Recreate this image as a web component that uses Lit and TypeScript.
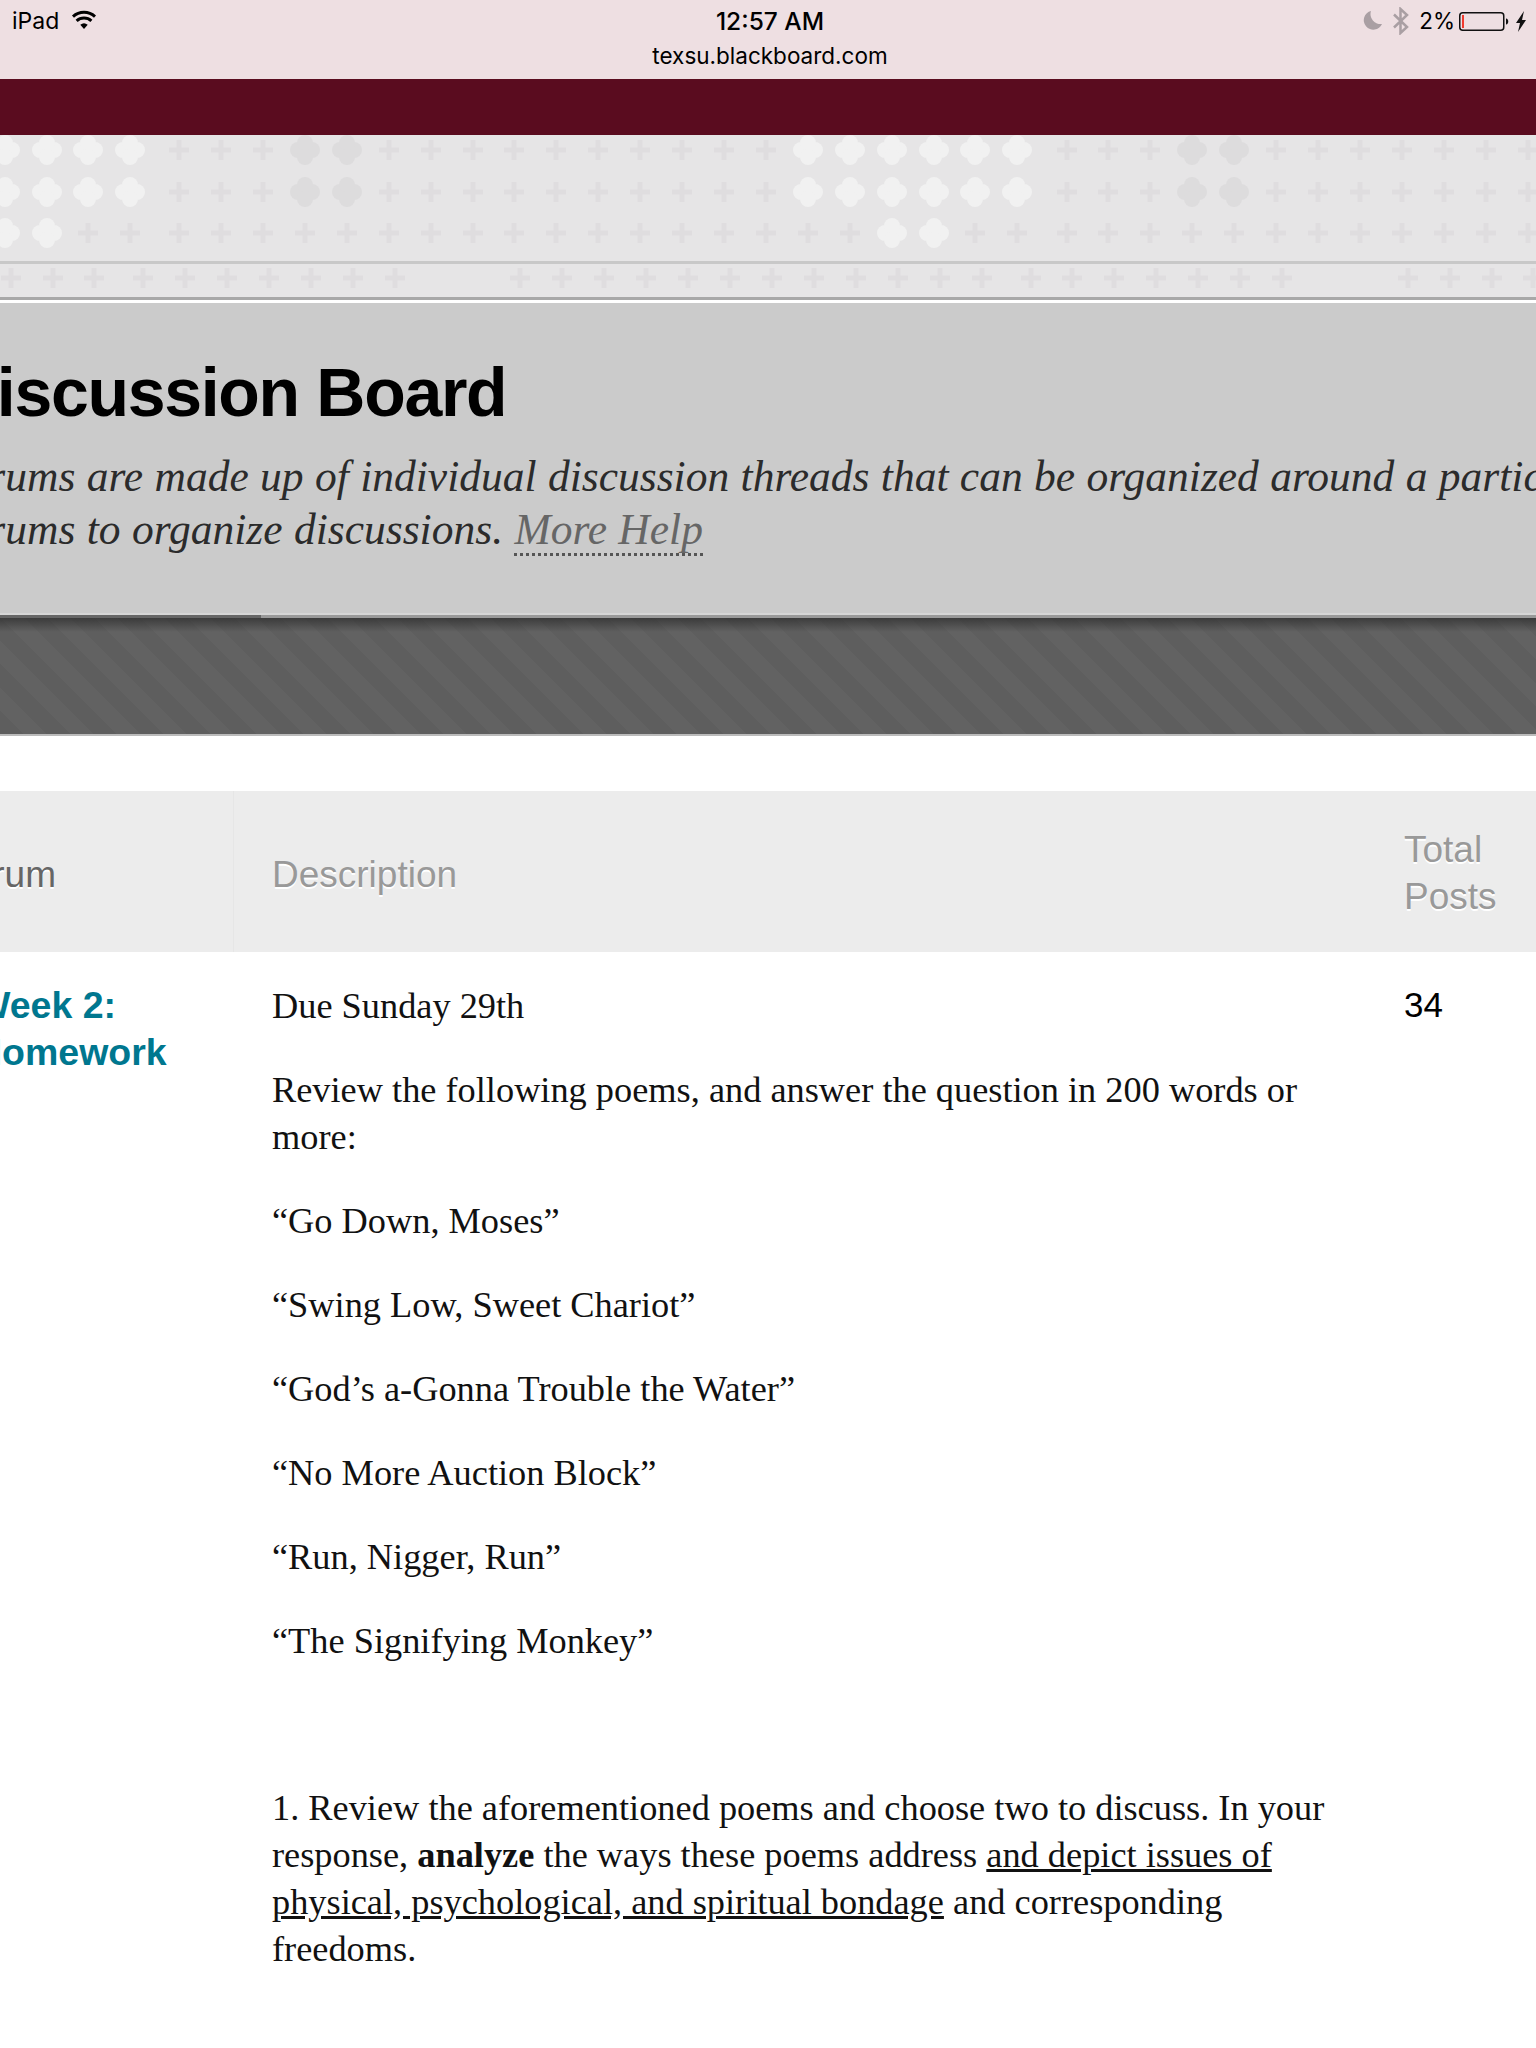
import { LitElement, html, css, svg } from "lit";
import { customElement } from "lit/decorators.js";

const COL = [5, 47, 88, 130, 179, 221, 263, 305, 347, 389, 431, 473, 514, 556, 598, 640, 682, 724, 766, 808, 850, 892, 934, 975, 1017, 1067, 1108, 1150, 1192, 1234, 1276, 1318, 1360, 1402, 1444, 1486, 1528];
const BAND = [11, 53, 94, 143, 185, 227, 269, 311, 353, 395, 520, 562, 604, 646, 688, 730, 772, 814, 856, 898, 940, 982, 1031, 1072, 1114, 1156, 1198, 1240, 1282, 1408, 1450, 1492, 1533];
const LIGHT_TOP = new Set([5, 47, 88, 130, 808, 850, 892, 934, 975, 1017]);
const DARK_TOP = new Set([305, 347, 1192, 1234]);
const LIGHT_LOW = new Set([5, 47, 892, 934]);

const plus = (x: number, y: number) => svg`<path class="plus" d="M${x - 10} ${y}H${x + 10}M${x} ${y - 10}V${y + 10}"/>`;
const clover = (x: number, y: number, cls: string) => svg`<g class=${cls}><circle cx=${x - 7} cy=${y} r="8"/><circle cx=${x + 7} cy=${y} r="8"/><circle cx=${x} cy=${y - 7} r="8"/><circle cx=${x} cy=${y + 7} r="8"/></g>`;
const mark = (x: number, y: number, light: Set<number>, dark: Set<number>) =>
  light.has(x) ? clover(x, y, "light") : dark.has(x) ? clover(x, y, "dark") : plus(x, y);

@customElement("app-root")
export class AppRoot extends LitElement {
  static styles = css`
    :host { display: block; width: 1536px; height: 2048px; overflow: hidden; background: #fff; font-family: "Liberation Sans", Arial, sans-serif; color: #000; }
    .status { height: 79px; background: #eedfe2; display: grid; grid-template-columns: 1fr auto 1fr; padding: 8px 8px 0 12px; box-sizing: border-box; font-size: 23px; line-height: 26px; }
    .status .left { display: flex; align-items: flex-start; gap: 12px; font-family: Inter, "Liberation Sans", sans-serif; font-size: 23px; }
    .status .left svg { margin-top: 2px; }
    .status .mid { text-align: center; font-family: Inter, "Liberation Sans", sans-serif; }
    .clock { font-weight: 500; font-size: 24.5px; line-height: 26px; margin-bottom: 9px; }
    .host { font-size: 22.5px; line-height: 26px; margin-top: 7px; }
    .status .right { display: flex; justify-content: flex-end; align-items: flex-start; font-family: Inter, "Liberation Sans", sans-serif; }
    .moon { margin-top: 2px; }
    .bt { margin: -1px 0 0 9px; }
    .batt { margin-top: 2px; }
    .pct { margin: 0 4px 0 9px; font-size: 22.5px; }
    .maroon { height: 56px; background: #5a0c1f; }
    .pattern { display: block; width: 1536px; height: 168px; background: #e6e5e6; }
    .pattern .plus { stroke: #dfdddf; stroke-width: 5; fill: none; }
    .pattern .light { fill: #f1f1f1; }
    .pattern .dark { fill: #dddcdd; }
    .pattern .soft { filter: blur(0.7px); }
    .pattern .rule1 { fill: #c8c8c8; }
    .pattern .rule2 { fill: #a8a8a8; }
    .pattern .gap { fill: #fff; }
    .head { height: 315px; background: #cbcbcb; box-sizing: border-box; overflow: hidden; white-space: nowrap; padding-top: 51px; border-bottom: 3px solid #777; border-image: linear-gradient(90deg, #666 262px, #999 262px) 1; box-shadow: inset 0 -2px 0 #d6d6d6; }
    h1 { margin: 0 0 0 -51px; font-size: 68px; line-height: 76px; font-weight: 700; letter-spacing: -1.3px; }
    .lead { margin: 20px 0 0 -60px; font-family: "Liberation Serif", "DejaVu Serif", serif; font-style: italic; font-size: 43.5px; line-height: 53px; word-spacing: 0.5px; color: #2b2b2b; }
    .help { color: #666; border-bottom: 3px dotted #555; }
    .stripes { height: 118px; box-sizing: border-box; border-bottom: 2px solid #bbb; background:
      linear-gradient(180deg, rgba(40,40,40,.65), rgba(40,40,40,0) 14px),
      repeating-linear-gradient(45deg, #5e5e5e 0 16.5px, #626262 16.5px 33px); }
    .table { margin-top: 55px; display: grid; grid-template-columns: 234px 1169px 133px; overflow: hidden; }
    .th { height: 161px; background: #ececec; display: flex; align-items: center; color: #999; font-size: 37px; line-height: 47px; box-sizing: border-box; padding: 5px 0 0 38px; text-shadow: 0 2px 0 #fff; }
    .th.forum { color: #666; padding-left: 0; border-right: 1px solid #e6e6e6; justify-content: flex-end; padding-right: 177px; white-space: nowrap; }
    .th.posts { padding: 2px 0 0 1px; }
    .name { color: #00778f; font-weight: 700; font-size: 37.5px; line-height: 47px; padding-top: 30px; margin-left: -25px; white-space: nowrap; }
    .desc { padding: 31px 40px 0 38px; font-family: "Liberation Serif", serif; font-size: 36.35px; line-height: 47px; color: #111; }
    .desc p { margin: 0 0 37px; }
    .desc .spacer { height: 47px; margin-bottom: 36px; }
    .count { font-size: 35px; line-height: 47px; padding: 29px 0 0 1px; }
  `;

  render() {
    return html`
      <div class="status">
        <div class="left">iPad
          <svg width="26" height="20" viewBox="0 0 26 20"><path d="M13 19 9.3 14.8a5.6 5.6 0 0 1 7.4 0Z" fill="#000"/><path d="M5.6 10.8a11 11 0 0 1 14.8 0M2 6.6a16.4 16.4 0 0 1 22 0" fill="none" stroke="#000" stroke-width="3"/></svg>
        </div>
        <div class="mid"><div class="clock">12:57 AM</div><div class="host">texsu.blackboard.com</div></div>
        <div class="right">
          <svg class="moon" width="20" height="22" viewBox="0 0 20 22"><path d="M8 1a9.5 9.500 0 1 0 11 13A10 10 0 0 1 8 1Z" fill="#a99fa3"/></svg>
          <svg class="bt" width="18" height="28" viewBox="0 0 18 28"><path d="M2 7.500 15 20 8.500 26V2L15 8 2 20.500" fill="none" stroke="#a99fa3" stroke-width="2.500"/></svg>
          <span class="pct">2%</span>
          <svg class="batt" width="69" height="22" viewBox="0 0 69 22"><rect x=".75" y="2.750" width="44" height="17.500" rx="3" fill="none" stroke="#111" stroke-width="1.500"/><rect x="3" y="5" width="2" height="13" fill="#f03a2e"/><path d="M47 8.500c3 0 3 6 0 6Z" fill="#111"/><path d="M65 1 57 13h4l-2 9 8-12h-4Z" fill="#111"/></svg>
        </div>
      </div>
      <div class="maroon"></div>
      <svg class="pattern" viewBox="0 0 1536 168" aria-hidden="true">
        <g class="soft">
          ${COL.map((x) => mark(x, 15, LIGHT_TOP, DARK_TOP))}
          ${COL.map((x) => mark(x, 57, LIGHT_TOP, DARK_TOP))}
          ${COL.map((x) => mark(x, 98, LIGHT_LOW, new Set()))}
          ${BAND.map((x) => plus(x, 143))}
        </g>
        <rect class="rule1" y="126" width="1536" height="3"/>
        <rect class="rule2" y="162" width="1536" height="3"/>
        <rect class="gap" y="165" width="1536" height="3"/>
      </svg>
      <div class="head">
        <h1>Discussion Board</h1>
        <p class="lead">Forums are made up of individual discussion threads that can be organized around a particular subject.<br/>Forums to organize discussions. <span class="help">More Help</span></p>
      </div>
      <div class="stripes"></div>
      <div class="table">
        <div class="th forum">Forum</div>
        <div class="th">Description</div>
        <div class="th posts">Total<br/>Posts</div>
        <div class="name">Week 2:<br/>Homework</div>
        <div class="desc">
          <p>Due Sunday 29th</p>
          <p>Review the following poems, and answer the question in 200 words or more:</p>
          <p>“Go Down, Moses”</p>
          <p>“Swing Low, Sweet Chariot”</p>
          <p>“God’s a-Gonna Trouble the Water”</p>
          <p>“No More Auction Block”</p>
          <p>“Run, Nigger, Run”</p>
          <p>“The Signifying Monkey”</p>
          <div class="spacer"></div>
          <p>1. Review the aforementioned poems and choose two to discuss. In your response, <b>analyze</b> the ways these poems address <u>and depict issues of physical, psychological, and spiritual bondage</u> and corresponding freedoms.</p>
        </div>
        <div class="count">34</div>
      </div>
    `;
  }
}
